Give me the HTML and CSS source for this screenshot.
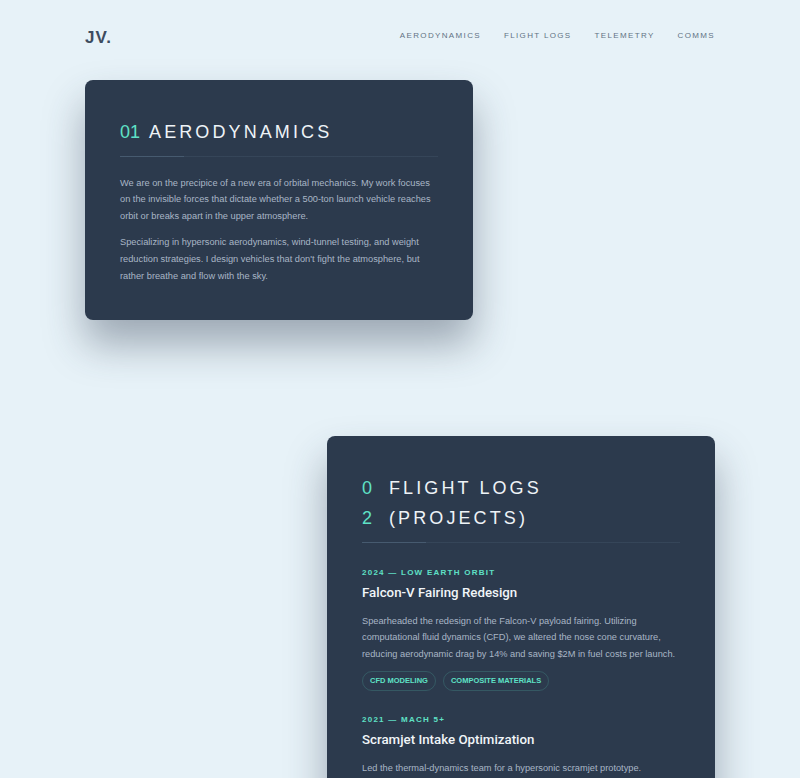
FILE: index.html
```html
<!DOCTYPE html>
<html lang="en">
<head>
    <meta charset="UTF-8">
    <meta name="viewport" content="width=device-width, initial-scale=1.0">
    <title>JV. — Aerospace Engineering</title>
    <link rel="stylesheet" href="styles.css">
</head>
<body>
    <div class="page">
        <!-- Top bar: monogram and section links -->
        <header class="topbar">
            <a class="logo" href="#">JV.</a>
            <nav class="nav">
                <a href="#aero">Aerodynamics</a>
                <a href="#logs">Flight Logs</a>
                <a href="#telemetry">Telemetry</a>
                <a href="#comms">Comms</a>
            </nav>
        </header>

        <main class="sections">
            <section class="card" id="aero">
                <h2 class="card-title"><span class="num">01</span><span>Aerodynamics</span></h2>
                <div class="divider"></div>
                <p>We are on the precipice of a new era of orbital mechanics. My work focuses on the invisible forces that dictate whether a 500-ton launch vehicle reaches orbit or breaks apart in the upper atmosphere.</p>
                <p>Specializing in hypersonic aerodynamics, wind-tunnel testing, and weight reduction strategies. I design vehicles that don't fight the atmosphere, but rather breathe and flow with the sky.</p>
            </section>

            <section class="card card-right" id="logs">
                <h2 class="card-title"><span class="num num-stack">02</span><span>Flight Logs (Projects)</span></h2>
                <div class="divider"></div>

                <article class="project">
                    <div class="meta">2024 — Low Earth Orbit</div>
                    <h3>Falcon-V Fairing Redesign</h3>
                    <p>Spearheaded the redesign of the Falcon-V payload fairing. Utilizing computational fluid dynamics (CFD), we altered the nose cone curvature, reducing aerodynamic drag by 14% and saving $2M in fuel costs per launch.</p>
                    <div class="tags">
                        <span class="tag">CFD Modeling</span>
                        <span class="tag">Composite Materials</span>
                    </div>
                </article>

                <article class="project">
                    <div class="meta">2021 — Mach 5+</div>
                    <h3>Scramjet Intake Optimization</h3>
                    <p>Led the thermal-dynamics team for a hypersonic scramjet prototype. Redesigned the intake ramps to keep combustion stable across the full flight envelope.</p>
                    <div class="tags">
                        <span class="tag">Thermal Analysis</span>
                        <span class="tag">Wind Tunnel</span>
                    </div>
                </article>
            </section>
        </main>
    </div>
</body>
</html>
```

FILE: styles.css
```css
body {
    margin: 0;
    background-color: #e7f2f8;
    font-family: 'Liberation Sans', Arial, sans-serif;
    color: #a9b6c6;
}
.page {
    width: 630px;
    margin: 0 auto;
}
.topbar {
    display: flex;
    justify-content: space-between;
    align-items: center;
    height: 74px;
}
.logo {
    font-size: 17px;
    font-weight: bold;
    letter-spacing: 1px;
    color: #3d4c60;
    text-decoration: none;
    margin-top: 2px;
}
.nav {
    display: flex;
    gap: 23px;
    margin-bottom: 3px;
}
.nav a {
    font-size: 8px;
    letter-spacing: 1.35px;
    text-transform: uppercase;
    color: #627284;
    text-decoration: none;
}
.sections {
    display: flex;
    flex-direction: column;
    gap: 116px;
    margin-top: 6px;
}
/* dark panels */
.card {
    width: 388px;
    box-sizing: border-box;
    padding: 38px 35px 36px 35px;
    background-color: #2c3a4d;
    border-radius: 8px;
    box-shadow: 0 24px 40px rgba(44, 58, 77, 0.4);
}
.card-right {
    align-self: flex-end;
}
.card-title {
    display: flex;
    gap: 9px;
    margin: 0 0 8px 0;
    font-size: 18px;
    font-weight: normal;
    line-height: 1.65;
    letter-spacing: 3.1px;
    text-transform: uppercase;
    color: #eef3f7;
}
.card-title .num {
    color: #5fe1c6;
    letter-spacing: 0;
    flex-shrink: 0;
}
.num-stack {
    width: 18px;
    word-break: break-all;
}
.divider {
    height: 1px;
    margin-bottom: 18px;
    background: linear-gradient(to right, rgba(120, 150, 175, 0.35) 0, rgba(120, 150, 175, 0.35) 20%, rgba(120, 150, 175, 0.12) 20%);
}
.card p {
    margin: 0 0 10px 0;
    font-size: 9.25px;
    line-height: 16.6px;
    color: #a9b6c6;
}
.card p:last-child {
    margin-bottom: 0;
}
.project {
    margin-top: 25px;
}
.project + .project {
    margin-top: 24px;
}
.meta {
    font-size: 8px;
    font-weight: bold;
    letter-spacing: 1.25px;
    text-transform: uppercase;
    color: #5fe1c6;
}
.project h3 {
    margin: 8px 0 13px 0;
    font-family: Roboto, 'Liberation Sans', sans-serif;
    font-size: 13.3px;
    font-weight: 500;
    color: #f1f5f8;
}
.project p {
    margin-bottom: 9px;
}
.tags {
    display: flex;
    gap: 7px;
}
.tag {
    font-size: 7.5px;
    font-weight: bold;
    text-transform: uppercase;
    color: #5fe1c6;
    border: 1px solid rgba(95, 225, 198, 0.18);
    border-radius: 10px;
    padding: 0 7px;
    height: 18px;
    line-height: 18px;
}
```
